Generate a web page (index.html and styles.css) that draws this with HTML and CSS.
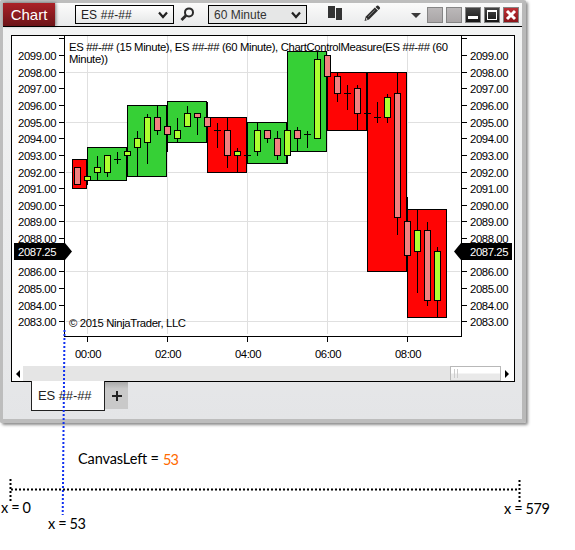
FILE: index.html
```html
<!DOCTYPE html>
<html lang="en">
<head>
<meta charset="utf-8">
<title>Chart</title>
<link rel="stylesheet" href="styles.css">
</head>
<body>
<main class="stage">
  <section class="window">
    <header class="titlebar">
      <h1 class="title">Chart</h1>
      <div class="select instrument"><span class="wide">ES ##-##</span><svg width="10" height="8" viewBox="0 0 10 8"><path d="M1 1.5 5 6 9 1.5" fill="none" stroke="#222" stroke-width="2.2"/></svg></div>
      <svg class="search" width="15" height="15" viewBox="0 0 15 15"><circle cx="9" cy="5.4" r="4" fill="none" stroke="#2b2b2b" stroke-width="2"/><path d="M6 8.5 1.5 13" stroke="#2b2b2b" stroke-width="2.8"/></svg>
      <div class="select interval"><span>60 Minute</span><svg width="10" height="8" viewBox="0 0 10 8"><path d="M1 1.5 5 6 9 1.5" fill="none" stroke="#222" stroke-width="2.2"/></svg></div>
      <svg class="bars" width="14" height="14" viewBox="0 0 14 14"><path d="M0 0H7V12H0ZM8 2H14V14H8Z" fill="#333"/></svg>
      <svg class="pencil" width="17" height="17" viewBox="0 0 17 17"><path d="M0.5 16 1.8 11.6 10.8 2.6 14 5.6 5 14.6Z" fill="#2d2d2d"/><path d="M11.5 1.9 12.8 .7Q13.6 .1 14.4 .8L15.8 2.2Q16.4 3 15.8 3.7L14.7 4.9Z" fill="#2d2d2d"/><path d="M4.2 11.6 10.8 5" stroke="#999" stroke-width=".8"/><path d="M2.2 12.8 3.8 14.3 1.8 14.9Z" fill="#ddd"/></svg>
      <svg class="caret" width="10" height="5" viewBox="0 0 10 5"><path d="M0 0H10L5 5Z" fill="#3a3a3a"/></svg>
      <div class="controls">
        <i class="control blank"></i><i class="control blank"></i>
        <i class="control dark"><svg width="14" height="14"><path d="M2 8H12V11H2Z" fill="#fff"/></svg></i>
        <i class="control dark"><svg width="14" height="14"><path d="M2 2H12V12H2ZM3 4V11H11V4Z" fill="#fff" fill-rule="evenodd"/></svg></i>
        <i class="control close"><svg width="14" height="14"><path d="M3 3 11 11M11 3 3 11" stroke="#fff" stroke-width="3"/></svg></i>
      </div>
    </header>
    <div class="panel">
      <svg id="chart" class="chart" width="502" height="330" viewBox="12 36 502 330"></svg>
      <div class="scroll">
        <span class="arrow"><svg width="4" height="8" viewBox="0 0 4 8"><path d="M4 0V8L0 4Z"/></svg></span>
        <span class="thumb"><i></i><i></i></span>
        <span class="arrow next"><svg width="4" height="8" viewBox="0 0 4 8"><path d="M0 0V8L4 4Z"/></svg></span>
      </div>
    </div>
    <footer class="tabs">
      <span class="tab">ES ##-##</span>
      <span class="add"><svg width="10" height="10"><path d="M4 0H6V4H10V6H6V10H4V6H0V4H4Z" fill="#222"/></svg></span>
    </footer>
  </section>
  <svg class="notes" width="575" height="550" viewBox="0 0 575 550">
    <path d="M64.5 330 62.7 515" class="guide"/>
    <path d="M11 489.5H519" class="ruler"/>
    <path d="M10.5 479V501M519.5 480V502" class="ruler"/>
    <text x="78" y="464" textLength="81">CanvasLeft =</text>
    <text x="163" y="465" textLength="16" class="value">53</text>
    <text x="1" y="513" textLength="30">x = 0</text>
    <text x="48" y="529" textLength="38">x = 53</text>
    <text x="504" y="514" textLength="46">x = 579</text>
  </svg>
</main>
<script src="chart.js"></script>
</body>
</html>
```
FILE: styles.css
```css
* { box-sizing: border-box; }
body { margin: 0; background: #fff; font-family: "Liberation Sans", Arial, sans-serif; }
.stage { position: relative; width: 575px; height: 550px; overflow: hidden; }
svg { display: block; flex: none; }
.window {
  width: 526px; height: 423px;
  border: solid #bdbdbd; border-width: 3px 4px 4px 3px;
  border-right-color: #b9b9b9;
  border-radius: 2px;
  background: linear-gradient(#f3f4f4, #e4e5e7);
  box-shadow: 2px 2px 3px rgba(0, 0, 0, .45);
}
.titlebar {
  display: flex; align-items: flex-start;
  height: 24px; border-bottom: 1px solid #000;
  background: linear-gradient(#fbfbfb, #e9eaeb);
}
.title {
  width: 52px; height: 23px; margin: 0 20px 0 0;
  background: linear-gradient(#ab2127, #6c1418);
  box-shadow: 1px 0 3px rgba(0, 0, 0, .5);
  color: #fff; font-size: 15px; font-weight: 400; line-height: 23px; text-align: center;
}
.select {
  display: flex; align-items: center; justify-content: space-between;
  width: 99px; height: 19px; margin-top: 2px; padding: 0 5px;
  border: 1px solid #000; background: linear-gradient(#fff, #e6e7e7);
  color: #222; font-size: 12px;
}
.interval { background: #e6e7e7; color: #333; }
.wide { letter-spacing: .1px; }
.search { margin: 4px 13px 0 6px; }
.bars { margin: 3px 22px 0 21px; }
.pencil { margin-top: 2px; }
.caret { margin: 10px 6px 0 30px; }
.controls { display: flex; gap: 3px; margin-top: 4px; }
.control { width: 16px; height: 16px; border: 1px solid #858585; }
.blank { background: linear-gradient(#bbb8b9, #aaa6a7); }
.dark { background: linear-gradient(#444, #161616); }
.close { background: linear-gradient(#bd3035, #8b1519); }
.panel { width: 504px; height: 347px; margin: 8px 0 0 8px; border: 1px solid #000; background: #fff; }
.chart { font-size: 11.3px; }
.scroll { display: flex; height: 15px; margin-left: 1px; background: #e5e5e5; }
.arrow { display: flex; align-items: center; justify-content: center; width: 10px; background: #fff; }
.next { width: 13px; padding-right: 2px; }
.thumb {
  display: flex; align-items: center; gap: 2px;
  width: 51px; margin-left: auto; padding-left: 3px;
  border: 1px solid #b8b8b8; background: linear-gradient(#fff 45%, #e9e9e9 55%);
}
.thumb i { width: 1px; height: 9px; background: #ccc; }
.tabs { display: flex; margin-left: 28px; align-items: flex-start; }
.tab {
  width: 74px; height: 30px; margin-top: -1px; padding-left: 6px;
  border: 1px solid #222; border-top: 0; background: #fff;
  color: #222; font-size: 13px; line-height: 29px; letter-spacing: -.1px; white-space: nowrap;
}
.add {
  display: flex; align-items: center; justify-content: center;
  width: 23px; height: 27px; background: linear-gradient(#aaa, #c9c9c9 25%);
}
.notes { position: absolute; top: 0; left: 0; font-family: Lato, sans-serif; font-size: 14.5px; fill: #000; stroke: none; }
.value { fill: #ff6a00; }
.guide { stroke: #1030f0; stroke-width: 2; stroke-dasharray: 2 2; }
.ruler { stroke: #000; stroke-width: 2; stroke-dasharray: 2 2; fill: none; }
```
FILE: chart.js
```js
const svg = document.getElementById('chart');
const NS = 'http://www.w3.org/2000/svg';

function add(name, attrs, text) {
  const el = document.createElementNS(NS, name);
  for (const key in attrs) el.setAttribute(key, attrs[key]);
  if (text) el.textContent = text;
  svg.appendChild(el);
}
function fill(x, y, width, height, color) {
  add('rect', { x, y, width, height, fill: color });
}
// A filled box with a one pixel outline; the right and bottom edges are inclusive.
function box(x1, y1, x2, y2, color) {
  add('rect', { x: x1 + .5, y: y1 + .5, width: x2 - x1, height: y2 - y1, fill: color, stroke: '#000' });
}

const RED = '#ff0404', GREEN = '#36d036', DOWN = '#f08080', UP = '#adff2f';
const prices = [[2099, 55], [2098, 72], [2097, 88], [2096, 105], [2095, 122], [2094, 138], [2093, 155],
  [2092, 172], [2091, 188], [2090, 205], [2089, 221], [2088, 238], [2086, 271], [2085, 288], [2084, 305], [2083, 321]];
const hours = [['00:00', 87], ['02:00', 167], ['04:00', 247], ['06:00', 327], ['08:00', 407]];

for (const y of [72, 122, 172, 221, 271, 321]) fill(66, y, 394, 1, '#e0e0e0');
for (const [, x] of hours) fill(x, 36, 1, 298, '#e0e0e0');

[[72, 159, 86, 188, RED], [87, 147, 126, 180, GREEN], [127, 105, 166, 176, GREEN], [167, 101, 206, 142, GREEN],
 [207, 117, 246, 172, RED], [247, 122, 286, 163, GREEN], [287, 51, 326, 151, GREEN], [327, 72, 366, 130, RED],
 [367, 72, 406, 271, RED], [407, 209, 446, 317, RED]].forEach(b => box(...b));

// x, wick top, body top, body bottom, wick bottom, color (none for an unchanged bar)
[[77, 167, 167, 184, 184, DOWN], [87, 176, 176, 180, 184, UP], [97, 156, 167, 172, 180, UP], [107, 155, 155, 172, 176, UP],
 [117, 152, 159, 159, 163], [127, 147, 151, 155, 159, UP], [137, 131, 138, 147, 176, UP], [147, 114, 117, 142, 163, UP],
 [157, 105, 117, 130, 134, DOWN], [167, 122, 126, 134, 151, DOWN], [177, 118, 130, 138, 142, UP], [187, 106, 113, 126, 126, UP],
 [197, 113, 113, 117, 134, DOWN], [207, 102, 117, 126, 126, DOWN], [217, 123, 130, 130, 147], [227, 117, 130, 155, 167, DOWN],
 [237, 148, 151, 155, 172, UP], [247, 151, 155, 155, 159], [257, 122, 130, 151, 155, UP], [267, 130, 130, 138, 142, DOWN],
 [277, 131, 138, 155, 159, DOWN], [287, 126, 130, 155, 163, UP], [297, 127, 130, 138, 151, DOWN], [307, 131, 134, 134, 147],
 [317, 51, 59, 138, 138, UP], [327, 55, 55, 76, 80, DOWN], [337, 72, 76, 93, 101, DOWN], [347, 85, 93, 93, 109],
 [357, 85, 88, 113, 130, DOWN], [367, 105, 113, 113, 122], [377, 102, 117, 117, 122], [387, 94, 97, 117, 122, UP],
 [397, 72, 93, 217, 234, DOWN], [407, 197, 221, 255, 271, DOWN], [417, 209, 230, 251, 292, UP],
 [427, 222, 230, 300, 305, DOWN], [437, 247, 251, 300, 317, UP]].forEach(([x, high, top, bottom, low, color]) => {
  fill(x, high, 1, low - high + 1, '#000');
  if (color) box(x - 3, top, x + 3, bottom, color);
  else fill(x - 3, top, 7, 1, '#000');
});

fill(64, 36, 1, 301, '#000');
fill(461, 36, 1, 301, '#000');
fill(64, 336, 398, 1, '#000');
fill(59, 38, 5, 1, '#000');
fill(462, 38, 5, 1, '#000');
for (const [price, y] of prices) {
  fill(59, y, 5, 1, '#000');
  fill(462, y, 5, 1, '#000');
  add('text', { x: 18, y: y + 5, textLength: 38.5 }, price + '.00');
  add('text', { x: 470, y: y + 5, textLength: 38.5 }, price + '.00');
}
for (const [label, x] of hours) {
  fill(x, 337, 1, 5, '#000');
  add('text', { x: x - 12, y: 358, textLength: 26.5 }, label);
}
add('path', { d: 'M14 243H65L72 251.5 65 260H14Z' });
add('path', { d: 'M512 243H461L454 251.5 461 260H512Z' });
add('text', { x: 18, y: 256, textLength: 38.5, fill: '#fff' }, '2087.25');
add('text', { x: 470, y: 256, textLength: 38.5, fill: '#fff' }, '2087.25');
add('text', { x: 69, y: 51, textLength: 379 }, 'ES ##-## (15 Minute), ES ##-## (60 Minute), ChartControlMeasure(ES ##-## (60');
add('text', { x: 69, y: 63, textLength: 39 }, 'Minute))');
add('text', { x: 69, y: 327, textLength: 117 }, '© 2015 NinjaTrader, LLC');
```
